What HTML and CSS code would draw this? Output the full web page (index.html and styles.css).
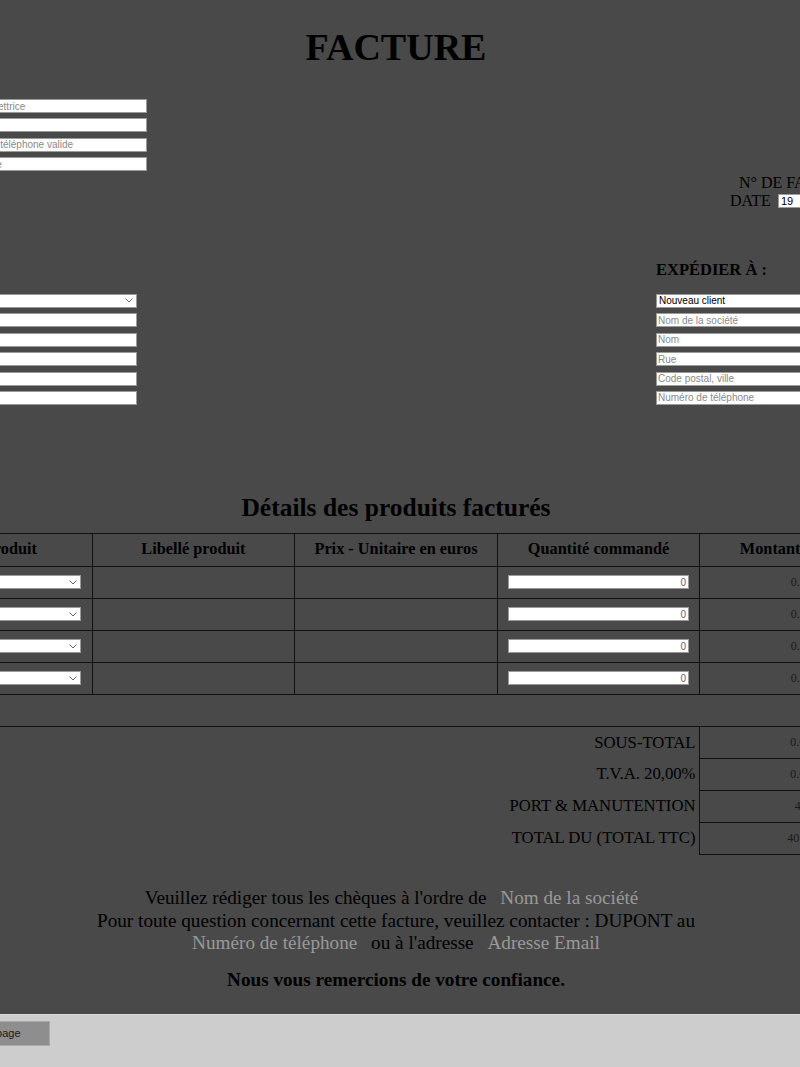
FILE: index.html
```html
<!DOCTYPE html>
<html lang="fr">
<head>
<meta charset="utf-8">
<title>Facture</title>
<link rel="stylesheet" href="styles.css">
</head>
<body>
<div class="page">
  <h1 class="title">FACTURE</h1>

  <div class="head">
    <div class="issuer">
      <input class="field" type="text" placeholder="Société émettrice">
      <input class="field" type="text" placeholder="Adresse">
      <input class="field" type="text" placeholder="Numéro de téléphone valide">
      <input class="field" type="text" placeholder="Email valide">
    </div>
    <div class="meta">
      <div class="meta-row meta-num"><span class="meta-label">N° DE FACTURE</span><input class="field meta-input" type="text" value="2019-001"></div>
      <div class="meta-row"><span class="meta-label">DATE</span><input class="field meta-input" type="text" value="19"></div>
    </div>
  </div>

  <div class="parties">
    <div class="party party-bill">
      <select class="field pick"><option>Nouveau client</option></select>
      <input class="field" type="text" placeholder="Nom de la société">
      <input class="field" type="text" placeholder="Nom">
      <input class="field" type="text" placeholder="Rue">
      <input class="field" type="text" placeholder="Code postal, ville">
      <input class="field" type="text" placeholder="Numéro de téléphone">
    </div>
    <div class="party party-ship">
      <h3 class="party-title">EXPÉDIER À :</h3>
      <select class="field pick"><option>Nouveau client</option></select>
      <input class="field" type="text" placeholder="Nom de la société">
      <input class="field" type="text" placeholder="Nom">
      <input class="field" type="text" placeholder="Rue">
      <input class="field" type="text" placeholder="Code postal, ville">
      <input class="field" type="text" placeholder="Numéro de téléphone">
    </div>
  </div>

  <h2 class="section">Détails des produits facturés</h2>

  <table class="products">
    <thead>
      <tr>
        <th>Code produit</th>
        <th>Libellé produit</th>
        <th>Prix - Unitaire en euros</th>
        <th>Quantité commandé</th>
        <th>Montant en euros</th>
      </tr>
    </thead>
    <tbody>
      <tr>
        <td><select class="field pick cell-field"><option></option></select></td>
        <td></td><td></td>
        <td><input class="field cell-field qty" type="text" value="0"></td>
        <td class="amount">0.00</td>
      </tr>
      <tr>
        <td><select class="field pick cell-field"><option></option></select></td>
        <td></td><td></td>
        <td><input class="field cell-field qty" type="text" value="0"></td>
        <td class="amount">0.00</td>
      </tr>
      <tr>
        <td><select class="field pick cell-field"><option></option></select></td>
        <td></td><td></td>
        <td><input class="field cell-field qty" type="text" value="0"></td>
        <td class="amount">0.00</td>
      </tr>
      <tr>
        <td><select class="field pick cell-field"><option></option></select></td>
        <td></td><td></td>
        <td><input class="field cell-field qty" type="text" value="0"></td>
        <td class="amount">0.00</td>
      </tr>
    </tbody>
  </table>

  <table class="totals">
    <tr class="first">
      <td class="t-label">SOUS-TOTAL</td>
      <td class="amount">0.00</td>
    </tr>
    <tr>
      <td class="t-label">T.V.A. 20,00%</td>
      <td class="amount">0.00</td>
    </tr>
    <tr>
      <td class="t-label">PORT &amp; MANUTENTION</td>
      <td class="amount">40</td>
    </tr>
    <tr>
      <td class="t-label">TOTAL DU (TOTAL TTC)</td>
      <td class="amount">40.00</td>
    </tr>
  </table>

  <div class="notes">
    <p class="note-line">Veuillez rédiger tous les chèques à l'ordre de <span class="fill">Nom de la société</span></p>
    <p class="note-line">Pour toute question concernant cette facture, veuillez contacter : DUPONT au</p>
    <p class="note-line"><span class="fill">Numéro de téléphone</span> ou à l'adresse <span class="fill">Adresse Email</span></p>
  </div>
  <p class="thanks">Nous vous remercions de votre confiance.</p>

  <div class="toolbar">
    <button class="print" type="button">Imprimer la page</button>
  </div>
</div>
</body>
</html>
```
FILE: styles.css
```css
html, body {
  margin: 0;
  padding: 0;
}
body {
  background: #494949;
  display: flex;
  justify-content: center;
  overflow: hidden;
  font-family: "Liberation Serif", "Times New Roman", serif;
  color: #000;
}
.page {
  flex: 0 0 1014px;
  width: 1014px;
  margin-right: 8px;
}

/* form fields */
.field {
  display: block;
  box-sizing: border-box;
  height: 14px;
  margin: 0 0 5.4px 0;
  padding: 0 1px;
  border: 1px solid #9a9a9a;
  border-radius: 0;
  background: #fff;
  font-family: "Liberation Sans", Arial, sans-serif;
  font-size: 10px;
  line-height: 12px;
  color: #000;
  outline: none;
}
.field::placeholder {
  color: #8a8a8a;
  opacity: 1;
}
.pick {
  -webkit-appearance: none;
  appearance: none;
  padding: 0 14px 0 2px;
  background: #fff url("data:image/svg+xml,%3Csvg xmlns='http://www.w3.org/2000/svg' width='8' height='5' viewBox='0 0 8 5'%3E%3Cpath d='M0.5 0.5 L4 4 L7.5 0.5' fill='none' stroke='%23666' stroke-width='1'/%3E%3C/svg%3E") no-repeat right 3px center;
}

.title {
  margin: 25px 0 0;
  font-size: 38px;
  line-height: 44px;
  font-weight: bold;
  text-align: center;
}

.head {
  display: flex;
  align-items: flex-start;
  margin-top: 30px;
}
.issuer {
  margin-left: 57px;
  width: 201px;
}
.issuer .field { width: 201px; }
.meta {
  margin-left: 583px;
  margin-top: 74.6px;
}
.meta-row {
  display: flex;
  align-items: center;
  height: 18px;
  font-size: 16px;
  line-height: 18px;
}
.meta-num { padding-left: 9px; }
.meta-input {
  margin: 0 0 0 7px;
  width: 100px;
  padding-left: 2px;
  font-size: 11px;
}
.meta-label { white-space: nowrap; }

.parties {
  display: flex;
  align-items: flex-end;
  margin-top: 50.6px;
}
.party-bill { width: 248px; }
.party-bill .field { width: 248px; }
.party-ship {
  margin-left: 519px;
  width: 200px;
}
.party-ship .field { width: 200px; }
.party-title {
  margin: 0 0 13.75px;
  font-size: 16.5px;
  line-height: 20px;
  font-weight: bold;
  white-space: nowrap;
}

.section {
  margin: 82.7px 0 9.9px;
  font-size: 25.5px;
  line-height: 30px;
  font-weight: bold;
  text-align: center;
}

.products, .totals {
  width: 1014px;
  border-collapse: collapse;
  table-layout: fixed;
}
.products th, .products td {
  border: 1px solid #111;
  padding: 0;
  width: 20%;
}
.products th {
  height: 30px;
  padding-bottom: 2px;
  font-size: 16.3px;
  font-weight: bold;
  text-align: center;
}
.products td {
  height: 31px;
}
.cell-field {
  width: 181px;
  margin: 0 auto;
}
.qty {
  text-align: right;
  padding-right: 2px;
  color: #5f6578;
}
.amount {
  text-align: center;
  font-size: 12px;
  color: #1a1a1a;
}

.totals {
  margin-top: 31px;
}
.totals td {
  height: 31px;
  padding: 0;
}
.totals .first td { border-top: 1px solid #111; }
.t-label {
  width: 80%;
  text-align: right;
  font-size: 16.7px;
  padding-right: 3px !important;
  box-sizing: border-box;
}
.totals .amount {
  width: 20%;
  border: 1px solid #111;
}

.notes {
  margin-top: 32.6px;
  text-align: center;
  font-size: 19.2px;
  line-height: 22.4px;
}
.note-line { margin: 0; }
.fill {
  color: #999;
  padding: 0 9px;
}
.thanks {
  margin: 14.2px 0 0;
  text-align: center;
  font-size: 19.2px;
  line-height: 22.4px;
  font-weight: bold;
}

.toolbar {
  margin-top: 22.6px;
  height: 53px;
  box-sizing: border-box;
  border-top: 1px solid #d9d9d9;
  background: #cdcdcd;
  padding-top: 6px;
}
.print {
  display: block;
  margin-left: 20px;
  height: 25px;
  padding: 0 28px;
  border: 1px solid #a9a9a9;
  border-radius: 0;
  background: #8e8e8e;
  font-family: "Liberation Sans", Arial, sans-serif;
  font-size: 11px;
  color: #1a1a1a;
}
```
